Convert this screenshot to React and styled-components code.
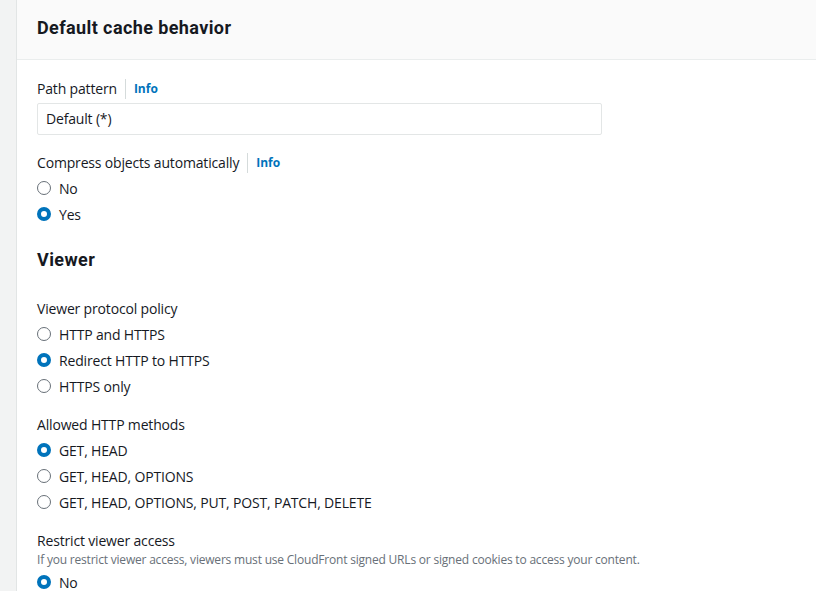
import React from "react";
import styled, { createGlobalStyle } from "styled-components";

const Global = createGlobalStyle`
  html, body { margin: 0; padding: 0; background: #f2f3f3; }
  body { font-family: "Open Sans", "Noto Sans", Arial, sans-serif; color: #16191f; letter-spacing: -0.17px; }
`;

const Page = styled.div`
  display: flex;
  min-height: 591px;
`;

const Gutter = styled.div`
  width: 16px;
  flex: none;
  background: #f2f3f3;
`;

const Panel = styled.section`
  flex: 1;
  background: #fff;
  border-left: 1px solid #e2e5e5;
`;

const Header = styled.header`
  height: 60px;
  box-sizing: border-box;
  padding: 16px 20px 0;
  background: #fafafa;
  border-bottom: 1px solid #eaeded;
  font-family: Roboto, "Open Sans", Arial, sans-serif;
  font-size: 18px;
  font-weight: 700;
  line-height: 24px;
  letter-spacing: 0.4px;
`;

const Body = styled.div`
  padding: 17px 20px 0;
  display: flex;
  flex-direction: column;
`;

const Field = styled.div`
  display: flex;
  flex-direction: column;
  margin-top: ${(p) => p.$top || 0}px;
`;

const LabelRow = styled.div`
  display: flex;
  align-items: center;
  box-sizing: border-box;
  font-size: 14px;
  line-height: 20px;
  height: 22px;
  padding-top: 2px;
`;

const Info = styled.a`
  margin-left: 8px;
  padding-left: 8px;
  border-left: 1px solid #d5dbdb;
  color: #0073bb;
  font-size: 12px;
  font-weight: 700;
  line-height: 20px;
  text-decoration: none;
  letter-spacing: 0;
`;

const Description = styled.div`
  font-size: 12px;
  line-height: 16px;
  color: #687078;
  padding-top: 1px;
  height: 16px;
  box-sizing: border-box;
  letter-spacing: -0.2px;
`;

const Input = styled.div`
  margin-top: 4px;
  width: 565px;
  height: 32px;
  box-sizing: border-box;
  border: 1px solid #e3e6e6;
  border-radius: 2px;
  padding: 0 8px;
  font-size: 14px;
  line-height: 30px;
`;

const Options = styled.div`
  margin-top: 2px;
  display: flex;
  flex-direction: column;
`;

const Option = styled.label`
  display: flex;
  align-items: center;
  height: 26px;
  font-size: 14px;
  gap: 8px;
`;

const Radio = styled.span`
  width: 14px;
  height: 14px;
  box-sizing: border-box;
  border-radius: 50%;
  flex: none;
  background: #fff;
  border: ${(p) => (p.$checked ? "4px solid #0073bb" : "1.5px solid #687078")};
`;

const SectionTitle = styled.h3`
  margin: 21px 0 0;
  font-family: Roboto, "Open Sans", Arial, sans-serif;
  font-size: 18px;
  font-weight: 700;
  line-height: 24px;
  letter-spacing: 0.4px;
`;

function RadioGroup({ items, checked }) {
  return (
    <Options>
      {items.map((t) => (
        <Option key={t}>
          <Radio $checked={t === checked} />
          {t}
        </Option>
      ))}
    </Options>
  );
}

export default function App() {
  return (
    <>
      <Global />
      <Page>
        <Gutter />
        <Panel>
          <Header>Default cache behavior</Header>
          <Body>
            <Field>
              <LabelRow>
                Path pattern <Info>Info</Info>
              </LabelRow>
              <Input>Default (*)</Input>
            </Field>
            <Field $top={16}>
              <LabelRow>
                Compress objects automatically <Info>Info</Info>
              </LabelRow>
              <RadioGroup items={["No", "Yes"]} checked="Yes" />
            </Field>
            <SectionTitle>Viewer</SectionTitle>
            <Field $top={25}>
              <LabelRow>Viewer protocol policy</LabelRow>
              <RadioGroup
                items={["HTTP and HTTPS", "Redirect HTTP to HTTPS", "HTTPS only"]}
                checked="Redirect HTTP to HTTPS"
              />
            </Field>
            <Field $top={14}>
              <LabelRow>Allowed HTTP methods</LabelRow>
              <RadioGroup
                items={[
                  "GET, HEAD",
                  "GET, HEAD, OPTIONS",
                  "GET, HEAD, OPTIONS, PUT, POST, PATCH, DELETE",
                ]}
                checked="GET, HEAD"
              />
            </Field>
            <Field $top={14}>
              <LabelRow>Restrict viewer access</LabelRow>
              <Description>
                If you restrict viewer access, viewers must use CloudFront signed URLs or signed cookies to access your content.
              </Description>
              <RadioGroup items={["No", "Yes"]} checked="No" />
            </Field>
          </Body>
        </Panel>
      </Page>
    </>
  );
}
